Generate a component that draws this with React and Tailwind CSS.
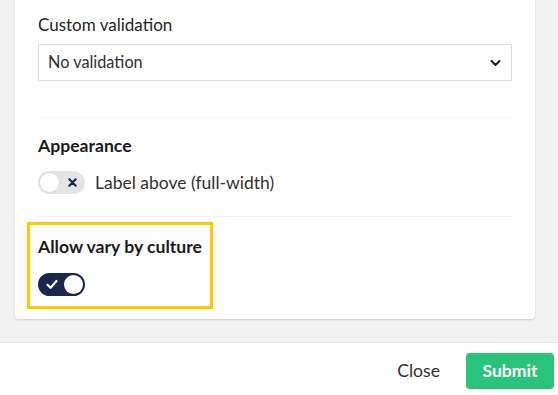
import React from "react";

function ToggleOff() {
  return (
    <div className="relative w-[47px] h-[23px] rounded-full bg-[#e4e4e6] shrink-0">
      <div className="absolute left-[1px] top-[1px] w-[21px] h-[21px] rounded-full bg-white border border-[#d8d8dc]" />
      <svg className="absolute right-[8px] top-[7px]" width="9" height="9" viewBox="0 0 10 10">
        <path d="M1.5 1.5 L8.5 8.5 M8.5 1.5 L1.5 8.5" stroke="#1b264f" strokeWidth="2.4" strokeLinecap="round" />
      </svg>
    </div>
  );
}

function ToggleOn() {
  return (
    <div className="relative w-[47px] h-[23px] rounded-full bg-[#1b264f] shrink-0">
      <svg className="absolute left-[8px] top-[6px]" width="12" height="11" viewBox="0 0 12 11">
        <path d="M1.5 5.8 L4.6 8.8 L10.5 2" stroke="white" strokeWidth="2.2" fill="none" strokeLinecap="round" strokeLinejoin="round" />
      </svg>
      <div className="absolute right-[2px] top-[2px] w-[19px] h-[19px] rounded-full bg-white" />
    </div>
  );
}

export default function App() {
  return (
    <div
      className="w-[558px] h-[395px] bg-[#f3f2f3] flex flex-col overflow-hidden text-[#1b1b1b]"
      style={{ fontFamily: "Lato, 'Noto Sans', sans-serif" }}
    >
      <div className="ml-[15px] w-[520px] h-[319px] bg-white rounded-b-[4px] shadow-[0_1px_2px_rgba(0,0,0,0.15)] px-[23px] pt-[13px] flex flex-col">
        <div className="text-[17px] leading-[24px] text-[#262626]">Custom validation</div>
        <div className="mt-[7px] h-[37px] border border-[#dcdcdc] flex items-center justify-between pl-[9px] pr-[10px]">
          <span className="text-[16.3px] text-[#303033]">No validation</span>
          <svg width="11" height="8" viewBox="0 0 11 8">
            <path d="M1.5 2 L5.5 6 L9.5 2" stroke="#1b1b1b" strokeWidth="2" fill="none" strokeLinecap="round" strokeLinejoin="round" />
          </svg>
        </div>
        <div className="mt-[36px] h-px bg-[#f2f2f2]" />
        <div className="mt-[16px] text-[17.6px] leading-[24px] font-bold text-[#1b1b1b]">Appearance</div>
        <div className="mt-[13px] h-[23px] flex items-center gap-[10px]">
          <ToggleOff />
          <span className="text-[17.5px] leading-[23px] text-[#303033]">Label above (full-width)</span>
        </div>
        <div className="mt-[22px] h-px bg-[#f2f2f2]" />
        <div className="mt-[5px] -ml-[11px] w-[186px] h-[87px] border-[3px] border-[#fecb00] pl-[8px] pt-[10px]">
          <div className="text-[17.6px] leading-[24px] font-bold text-[#1b1b1b] whitespace-nowrap">Allow vary by culture</div>
          <div className="mt-[14px]">
            <ToggleOn />
          </div>
        </div>
      </div>
      <div className="mt-[23px] flex-1 bg-white border-t border-[#e8e8e8] flex items-start justify-end pr-[4px] pt-[10px]">
        <button className="h-[36px] px-[15px] text-[17.6px] text-[#303033] mr-[11px]">Close</button>
        <button className="h-[36px] w-[88px] rounded-[4px] bg-[#2bc37c] text-white font-bold text-[17.6px]">Submit</button>
      </div>
    </div>
  );
}
